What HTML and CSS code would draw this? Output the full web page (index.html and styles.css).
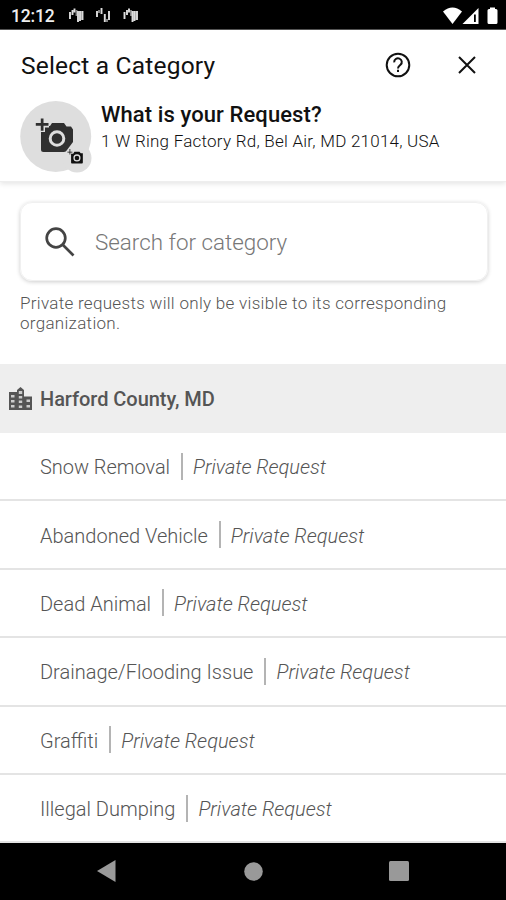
FILE: index.html
```html
<!DOCTYPE html>
<html lang="en">
<head>
<meta charset="utf-8">
<title>Select a Category</title>
<link rel="stylesheet" href="styles.css">
</head>
<body>
<div class="phone">
  <div class="status">
    <span class="clock">12:12</span>
    <svg class="notes" width="70" height="18" viewBox="0 0 70 18">
      <g id="bars"><path class="mid" d="M7.500 3v6M12 4v9"/><path d="M1 5v7M3.500 3v5M5.500 1.500v4M9 4v11M11 4v10M13.500 4v9"/></g>
      <path d="M28 4v6M32.500 1v6M35.800 7v8M40 4v9"/><path class="mid" d="M30 3v3M38 12v3"/>
      <use href="#bars" x="54.500"/>
    </svg>
    <svg class="signals" width="56" height="18" viewBox="0 0 56 18">
      <path d="M0 4.500Q9.500-3.500 19 4.500L9.500 17z"/>
      <path fill-rule="evenodd" d="M19.500 17 35.500 1V17zM31 7.500V15h1.800V7.500z"/>
      <path d="M44.500 3.500Q44.500 2 46 2h1V.5h5V2h1q1.500 0 1.500 1.500V15.500q0 1.500-1.500 1.500h-7q-1.500 0-1.500-1.500z"/>
    </svg>
  </div>
  <header class="header">
    <div class="titlebar">
      <h1 class="title">Select a Category</h1>
      <svg class="help" width="26" height="26" viewBox="0 0 26 26"><circle cx="13" cy="13" r="11.300"/><path d="M9.200 10.300a3.800 3.700 0 1 1 6.300 2.500c-1.300 1.100-2.500 1.700-2.500 3.700"/><path d="M13 17.800v2.200"/></svg>
      <svg class="close" width="18" height="18" viewBox="0 0 18 18"><path d="M1 1 17 17M17 1 1 17"/></svg>
    </div>
    <div class="request">
      <svg class="avatar" width="72" height="74" viewBox="0 0 72 74">
        <circle class="disc" cx="35.700" cy="36.500" r="35.500"/><circle class="disc" cx="57" cy="58" r="14.500"/>
        <path class="cam" d="M21 26h9l2-3h12l2.500 3.500H51l2 3V42l-6 8q-1 2-3 2H23.500q-2.500 0-2.500-2.500z"/>
        <path class="plus" d="M22 18v14M15 24.500h14"/>
        <path class="cam" d="M20.800 18.500h2.700V23h5v2.800h-5v5h-2.700v-5h-5V23h5z"/>
        <circle class="lens" cx="37" cy="38.500" r="6.800"/>
        <g transform="translate(41 44.500) scale(.42)"><path class="small" d="M24 22h5l3-5h12l3 4h5v22q0 2-2 2H26q-2 0-2-2z"/><path class="small" d="M20.300 11h1.800v6h5v1.800h-5v5h-1.800v-5h-5V17h5z"/><circle class="lens small" cx="38" cy="32" r="7"/></g>
      </svg>
      <div>
        <h2 class="question">What is your Request?</h2>
        <p class="address">1 W Ring Factory Rd, Bel Air, MD 21014, USA</p>
      </div>
    </div>
  </header>
  <main>
    <div class="search">
      <svg width="30" height="30" viewBox="0 0 30 30"><circle cx="11" cy="11" r="9.300"/><path d="m17.500 17.500 11 11"/></svg>
      <span>Search for category</span>
    </div>
    <p class="notice">Private requests will only be visible to its corresponding organization.</p>
    <div class="county">
      <svg width="24" height="24" viewBox="0 0 24 24"><path d="M0 5h8V3l3.500-3L15 3v6.500h8V23H0z"/><path class="windows" d="M2 8h3.500v2.500H2zM2 13h3.500v2.500H2zM2 18h3.500v2.500H2zM9.800 4h3.400v3H9.800zM9.800 9h3.400v2.500H9.800zM9.800 13.500h3.400V16H9.800zM9.800 18.500h3.400V21H9.800zM17.500 12.500H21V15h-3.500zM17.500 18H21v2.500h-3.500z"/></svg>
      <span>Harford County, MD</span>
    </div>
    <ul class="list">
      <li><span>Snow Removal</span><em>Private Request</em></li>
      <li><span>Abandoned Vehicle</span><em>Private Request</em></li>
      <li><span>Dead Animal</span><em>Private Request</em></li>
      <li><span>Drainage/Flooding Issue</span><em>Private Request</em></li>
      <li><span>Graffiti</span><em>Private Request</em></li>
      <li><span>Illegal Dumping</span><em>Private Request</em></li>
    </ul>
  </main>
  <nav class="nav">
    <svg width="19" height="22" viewBox="0 0 19 22"><path d="M0 11 18.500 0v22z"/></svg>
    <svg class="home" width="19" height="19" viewBox="0 0 19 19"><circle cx="9.500" cy="9.500" r="9.300"/></svg>
    <svg width="20" height="20" viewBox="0 0 20 20"><rect width="20" height="20" rx="1.500"/></svg>
  </nav>
</div>
</body>
</html>
```
FILE: styles.css
```css
* { box-sizing: border-box; }
body, h1, h2, p, ul { margin: 0; padding: 0; }
body { background: #fff; font-family: Roboto, "Liberation Sans", sans-serif; }
svg { display: block; flex: none; }
.phone { width: 506px; height: 900px; display: flex; flex-direction: column; overflow: hidden; }
.status { height: 30px; flex: none; background: #000; border-bottom: 1px solid #555; display: flex; align-items: center; padding: 2px 7px 0 11px; color: #eee; }
.clock { width: 58px; font-size: 17.500px; font-weight: 500; letter-spacing: -.2px; }
.notes { fill: none; stroke: #ddd; stroke-width: 1.900; }
.notes .mid { stroke: #888; }
.signals { margin-left: auto; fill: #fff; }
.header { height: 152px; flex: none; border-bottom: 1px solid #eee; box-shadow: 0 2px 5px rgba(0,0,0,.1); }
.titlebar { height: 70px; display: flex; align-items: center; padding: 0 30px 0 21px; }
.title { flex: 1; font-size: 24.500px; font-weight: 400; letter-spacing: .2px; color: #111; }
.help, .close { fill: none; stroke: #111; stroke-width: 2; }
.close { margin-left: 47px; }
.request { display: flex; padding-left: 20px; gap: 9px; }
.disc { fill: #dedede; }
.cam { fill: #303030; }
.plus { stroke: #dedede; stroke-width: 6; }
.lens { fill: #303030; stroke: #dedede; stroke-width: 3; }
.small { fill: #111; }
.question { padding-top: 1px; font-size: 22px; line-height: 28px; font-weight: 500; letter-spacing: .1px; color: #111; white-space: nowrap; }
.address { font-size: 17px; line-height: 24px; font-weight: 300; letter-spacing: .24px; color: #111; white-space: nowrap; }
.search { height: 79px; margin: 20px 18px 0 20px; border-radius: 12px; border: 1px solid #f0f0f0; box-shadow: 0 1px 4px rgba(0,0,0,.2); display: flex; align-items: center; padding-left: 24px; gap: 20px; font-size: 22.400px; font-weight: 300; color: #777; }
.search svg { fill: none; stroke: #444; stroke-width: 2.7; }
.notice { margin: 12px 30px 0 20px; height: 71px; font-size: 17px; line-height: 20px; font-weight: 300; letter-spacing: .3px; color: #555; }
.county { height: 69px; background: #eee; display: flex; align-items: center; padding-left: 9px; gap: 7px; font-size: 20px; font-weight: 500; letter-spacing: -.05px; color: #555; }
.county svg { fill: #555; }
.county .windows { fill: #ccc; }
.list { list-style: none; }
.list li { height: 68.400px; display: flex; align-items: center; padding: 2px 0 0 40px; border-bottom: 2px solid #e4e4e4; font-size: 20px; font-weight: 300; color: #555; }
.list li:first-child { letter-spacing: -.04px; }
.list em { display: flex; align-items: center; }
.list em::before { content: ""; width: 2px; height: 27px; background: #b4b4b4; margin: 0 10px 2px 11px; }
.nav { flex: 1; background: #000; display: flex; align-items: center; justify-content: space-between; padding: 0 97px 1px; fill: #999; }
.home { margin-left: 2px; }
```
